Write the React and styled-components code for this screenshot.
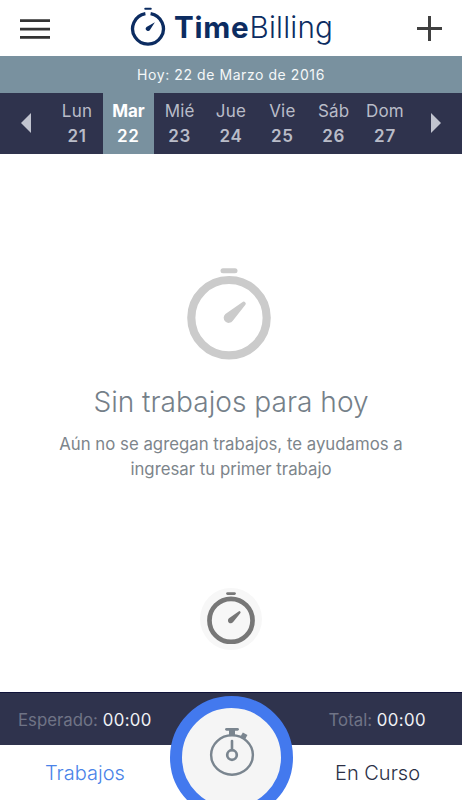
import React from 'react';
import styled, { createGlobalStyle } from 'styled-components';

const days = [
    { name: 'Lun', number: 21 },
    { name: 'Mar', number: 22, active: true },
    { name: 'Mié', number: 23 },
    { name: 'Jue', number: 24 },
    { name: 'Vie', number: 25 },
    { name: 'Sáb', number: 26 },
    { name: 'Dom', number: 27 },
];

const LogoIcon = () => (
    <svg width="36" height="40" viewBox="0 0 36 40" aria-hidden="true">
        <path d="M15.4 6.6A15.4 15.4 0 1 0 20.6 6.6" fill="none" stroke="#0c2c61" strokeWidth="3.3" />
        <path d="M15.2 1.8h5.6" stroke="#0c2c61" strokeWidth="1.9" strokeLinecap="round" />
        <path d="M24.9 15.2L20.1 22.8a2.3 2.3 0 1 1-3.6-2.8z" fill="#0c2c61" />
    </svg>
);

const Stopwatch = ({ size, color }) => (
    <svg width={size} height={size * 92 / 84} viewBox="0 0 84 92" aria-hidden="true">
        <circle cx="42" cy="49.7" r="37.7" fill="none" stroke={color} strokeWidth="8.2" />
        <path d="M36 2.8h12" stroke={color} strokeWidth="5" strokeLinecap="round" />
        <path d="M55.3 34.2a2 2 0 0 1 2.9 2.8L45.8 52.7a5 5 0 1 1-7.4-6.6z" fill={color} />
    </svg>
);

const TimerIcon = () => (
    <svg width="46" height="50" viewBox="0 0 46 50" fill="none" stroke="#7a858f" aria-hidden="true">
        <ellipse cx="23" cy="28" rx="20.9" ry="19.7" strokeWidth="2.4" />
        <path d="M17.5 2.3h11" strokeWidth="2.8" strokeLinecap="round" />
        <path d="M23 3v5" strokeWidth="6" />
        <path d="M32.6 7.6l4.6 2.6" strokeWidth="5" />
        <path d="M23 14v9" strokeWidth="2.6" strokeLinecap="round" />
        <circle cx="23" cy="28" r="4.8" strokeWidth="2.7" />
    </svg>
);

const App = () => {
    return (
        <Screen>
            <GlobalStyle />
            <Header>
                <IconButton aria-label="Menú">
                    <svg width="30" height="20" viewBox="0 0 30 20"><path d="M0 1.7h30M0 10.1h30M0 18.4h30" stroke="#333" strokeWidth="2.8" /></svg>
                </IconButton>
                <Brand>
                    <LogoIcon />
                    <BrandName><b>Time</b><span>Billing</span></BrandName>
                </Brand>
                <IconButton aria-label="Agregar">
                    <svg width="25" height="25" viewBox="0 0 25 25"><path d="M0 12.5h25M12.5 0v25" stroke="#404040" strokeWidth="3" /></svg>
                </IconButton>
            </Header>
            <Today>Hoy: 22 de Marzo de 2016</Today>
            <Week>
                <Arrow aria-label="Anterior">
                    <svg width="10" height="20" viewBox="0 0 10 20"><path d="M10 0v20L0 10z" fill="#c1c4cf" /></svg>
                </Arrow>
                {days.map((day) => (
                    <Day key={day.number} $active={day.active}>
                        <DayName $active={day.active}>{day.name}</DayName>
                        <DayNumber>{day.number}</DayNumber>
                    </Day>
                ))}
                <Arrow aria-label="Siguiente">
                    <svg width="10" height="20" viewBox="0 0 10 20"><path d="M0 0v20l10-10z" fill="#c1c4cf" /></svg>
                </Arrow>
            </Week>
            <Main>
                <EmptyIcon>
                    <Stopwatch size={84} color="#cbcbcb" />
                </EmptyIcon>
                <Title>Sin trabajos para hoy</Title>
                <Message>Aún no se agregan trabajos, te ayudamos a<br />ingresar tu primer trabajo</Message>
                <StartButton aria-label="Iniciar">
                    <Stopwatch size={48} color="#777" />
                </StartButton>
            </Main>
            <Footer>
                <Totals>
                    <Total><span>Esperado:</span> <strong>00:00</strong></Total>
                    <Total><span>Total:</span> <strong>00:00</strong></Total>
                </Totals>
                <Tabs>
                    <Tab $active>Trabajos</Tab>
                    <Tab>En Curso</Tab>
                </Tabs>
                <TimerButton aria-label="Cronómetro">
                    <TimerIcon />
                </TimerButton>
            </Footer>
        </Screen>
    );
};

const GlobalStyle = createGlobalStyle`
    * {
        box-sizing: border-box;
    }
    body {
        margin: 0;
        background: #fff;
        font-family: Inter, 'Liberation Sans', sans-serif;
    }
    button {
        padding: 0;
        border: none;
        background: none;
        font: inherit;
    }
    svg {
        display: block;
    }
`

const Screen = styled.div`
    display: flex;
    flex-direction: column;
    height: 800px;
    overflow: hidden;
`

const Header = styled.header`
    display: flex;
    justify-content: space-between;
    align-items: center;
    height: 56px;
    padding: 0 20px;
`

const IconButton = styled.button`
    padding-top: 1px;
`

const Brand = styled.div`
    display: flex;
    align-items: center;
    margin-right: 4px;
    padding-bottom: 3px;
`

const BrandName = styled.div`
    margin-left: 8px;
    color: #0c2c61;
    font-size: 29.6px;
    line-height: 40px;
    b {
        font-weight: 700;
        letter-spacing: 0.8px;
    }
    span {
        font-weight: 300;
        letter-spacing: 0.2px;
    }
`

const Today = styled.div`
    height: 37px;
    background: #79919f;
    color: #f4f7f8;
    font-size: 14px;
    line-height: 37px;
    letter-spacing: 0.57px;
    text-align: center;
`

const Week = styled.div`
    display: grid;
    grid-template-columns: repeat(9, 1fr);
    height: 61px;
    background: #2f334d;
`

const Arrow = styled.button`
    display: flex;
    justify-content: center;
    align-items: center;
    padding-bottom: 2px;
`

const Day = styled.div`
    display: flex;
    flex-direction: column;
    align-items: center;
    padding-top: 5.5px;
    background: ${({ $active }) => $active ? '#79919f' : 'transparent'};
    color: ${({ $active }) => $active ? '#fff' : '#b9bcc8'};
    font-size: 17px;
    line-height: 25.5px;
`

const DayName = styled.span`
    font-weight: ${({ $active }) => $active ? 700 : 400};
    letter-spacing: ${({ $active }) => $active ? '-0.1px' : '0.2px'};
`

const DayNumber = styled.span`
    font-weight: 600;
    letter-spacing: 0.7px;
`

const Main = styled.main`
    display: flex;
    flex: 1;
    flex-direction: column;
    align-items: center;
    padding-top: 114px;
`

const EmptyIcon = styled.div`
    margin-right: 4px;
`

const Title = styled.h1`
    margin: 22px 0 0;
    color: #757f89;
    font-size: 28.1px;
    font-weight: 350;
    line-height: 40px;
`

const Message = styled.p`
    margin: 10px 0 0;
    color: #7d858b;
    font-size: 16.8px;
    line-height: 24.5px;
    text-align: center;
`

const StartButton = styled.button`
    display: flex;
    justify-content: center;
    align-items: center;
    width: 62px;
    height: 62px;
    margin-top: 107px;
    padding-bottom: 2px;
    border-radius: 50%;
    background: #f7f7f7;
`

const Footer = styled.footer`
    position: relative;
    height: 108px;
    overflow: hidden;
`

const Totals = styled.div`
    display: flex;
    justify-content: space-between;
    height: 53px;
    padding: 0 36px 0 18px;
    border-top: 1px solid #10133a;
    background: #2f334d;
`

const Total = styled.div`
    color: #6f7386;
    font-size: 16.8px;
    line-height: 54px;
    strong {
        color: #f1f2f5;
        font-weight: 400;
        letter-spacing: 0.4px;
    }
`

const Tabs = styled.nav`
    display: flex;
    justify-content: space-between;
    height: 55px;
    padding: 0 42px 0 45px;
`

const Tab = styled.button`
    padding-top: 1px;
    color: ${({ $active }) => $active ? '#4a83e8' : '#2b2f45'};
    font-size: 20px;
    font-weight: 300;
    line-height: 54px;
`

/* sits over both footer rows and runs off the bottom edge */
const TimerButton = styled.button`
    position: absolute;
    top: 4px;
    left: 170px;
    display: flex;
    justify-content: center;
    width: 123px;
    height: 123px;
    padding-top: 19px;
    border: 12px solid #4379ee;
    border-radius: 50%;
    background: #f5f5f5;
`

export default App;
